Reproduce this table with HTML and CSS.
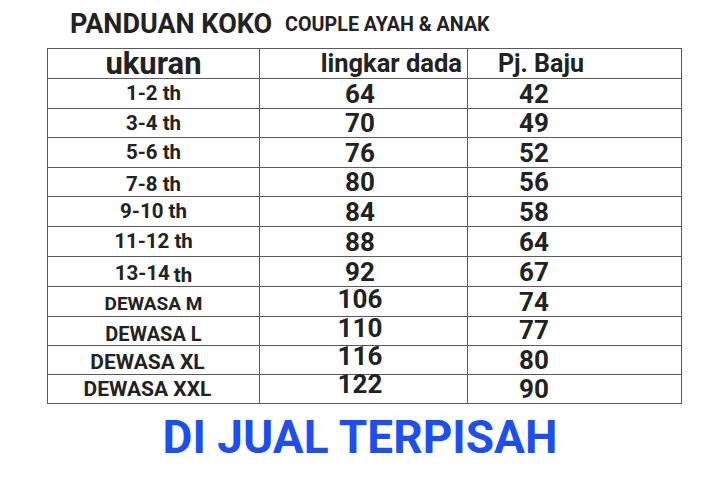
FILE: index.html
```html
<!DOCTYPE html>
<html>
<head>
<meta charset="utf-8">
<link rel="stylesheet" href="styles.css">
</head>
<body>
<div class="page">
  <div class="title">
    <span class="title-main">PANDUAN KOKO</span>
    <span class="title-sub">COUPLE AYAH &amp; ANAK</span>
  </div>
  <div class="chart">
    <div class="cell h c1">ukuran</div>
    <div class="cell h c2">lingkar dada</div>
    <div class="cell h c3">Pj. Baju</div>

    <div class="cell s">1-2 th</div><div class="cell n c2v">64</div><div class="cell n c3v">42</div>
    <div class="cell s">3-4 th</div><div class="cell n c2v">70</div><div class="cell n c3v">49</div>
    <div class="cell s">5-6 th</div><div class="cell n c2v">76</div><div class="cell n c3v">52</div>
    <div class="cell s low">7-8 th</div><div class="cell n c2v">80</div><div class="cell n c3v">56</div>
    <div class="cell s">9-10 th</div><div class="cell n c2v">84</div><div class="cell n c3v">58</div>
    <div class="cell s">11-12 th</div><div class="cell n c2v">88</div><div class="cell n c3v">64</div>
    <div class="cell s low-s">13-14 <span class="th-drop">th</span></div><div class="cell n c2v">92</div><div class="cell n c3v">67</div>
    <div class="cell s dm low-s">DEWASA M</div><div class="cell n c2v up-3">106</div><div class="cell n c3v">74</div>
    <div class="cell s dl low">DEWASA L</div><div class="cell n c2v up-4">110</div><div class="cell n c3v up-2">77</div>
    <div class="cell s dx low">DEWASA XL</div><div class="cell n c2v up-5">116</div><div class="cell n c3v">80</div>
    <div class="cell s dx">DEWASA XXL</div><div class="cell n c2v up-6">122</div><div class="cell n c3v">90</div>
  </div>
  <div class="note">DI JUAL TERPISAH</div>
</div>
</body>
</html>
```

FILE: styles.css
```css
html, body {
  margin: 0;
  padding: 0;
  background: #ffffff;
}
.page {
  width: 720px;
  height: 480px;
  font-family: Roboto, "Liberation Sans", sans-serif;
  font-weight: 700;
  color: #222222;
  overflow: hidden;
}
.title {
  height: 48px;
  padding-left: 70px;
  box-sizing: border-box;
  padding-top: 9px;
  white-space: nowrap;
}
.title-main {
  font-size: 27px;
  line-height: 30px;
}
.title-sub {
  font-size: 19.7px;
  line-height: 30px;
  margin-left: 9px;
  position: relative;
  top: -2px;
}
.chart {
  margin-left: 47px;
  width: 635px;
  box-sizing: border-box;
  display: grid;
  grid-template-columns: 211px 207px 213px;
  grid-template-rows: 29px 29px 28px 29px 28px 29px 29px 29px 29px 28px 28px 28px;
  gap: 1px;
  padding: 1px;
  background: #5a5a5a;
}
.cell {
  background: #ffffff;
  display: flex;
  align-items: center;
  justify-content: center;
  white-space: nowrap;
  box-sizing: border-box;
  line-height: 1;
}
.h {
  font-size: 25px;
}
.h.c1 {
  font-size: 31px;
}
.h.c2 {
  font-size: 25.5px;
  justify-content: flex-end;
  padding-right: 5px;
}
.h.c3 {
  justify-content: flex-start;
  padding-left: 30px;
}
.s {
  font-size: 20.5px;
}
.s.dm {
  font-size: 19px;
}
.s.dl {
  font-size: 20px;
}
.s.dx {
  font-size: 21px;
  padding-right: 12px;
}
.low {
  padding-top: 5px;
}
.low-s {
  padding-top: 3px;
}
.th-drop {
  margin-left: 4px;
  padding-top: 4px;
}
.n {
  font-size: 26px;
}
.c2v {
  padding-right: 7px;
}
.c3v {
  justify-content: flex-start;
  padding-left: 51px;
}
.up-2 {
  padding-bottom: 3px;
}
.up-3 {
  padding-bottom: 5px;
}
.up-4 {
  padding-bottom: 7px;
}
.up-5 {
  padding-bottom: 8px;
}
.up-6 {
  padding-bottom: 10px;
}
.note {
  margin-top: 10px;
  text-align: center;
  font-size: 46px;
  line-height: 46px;
  color: #1d4ff0;
}
```
